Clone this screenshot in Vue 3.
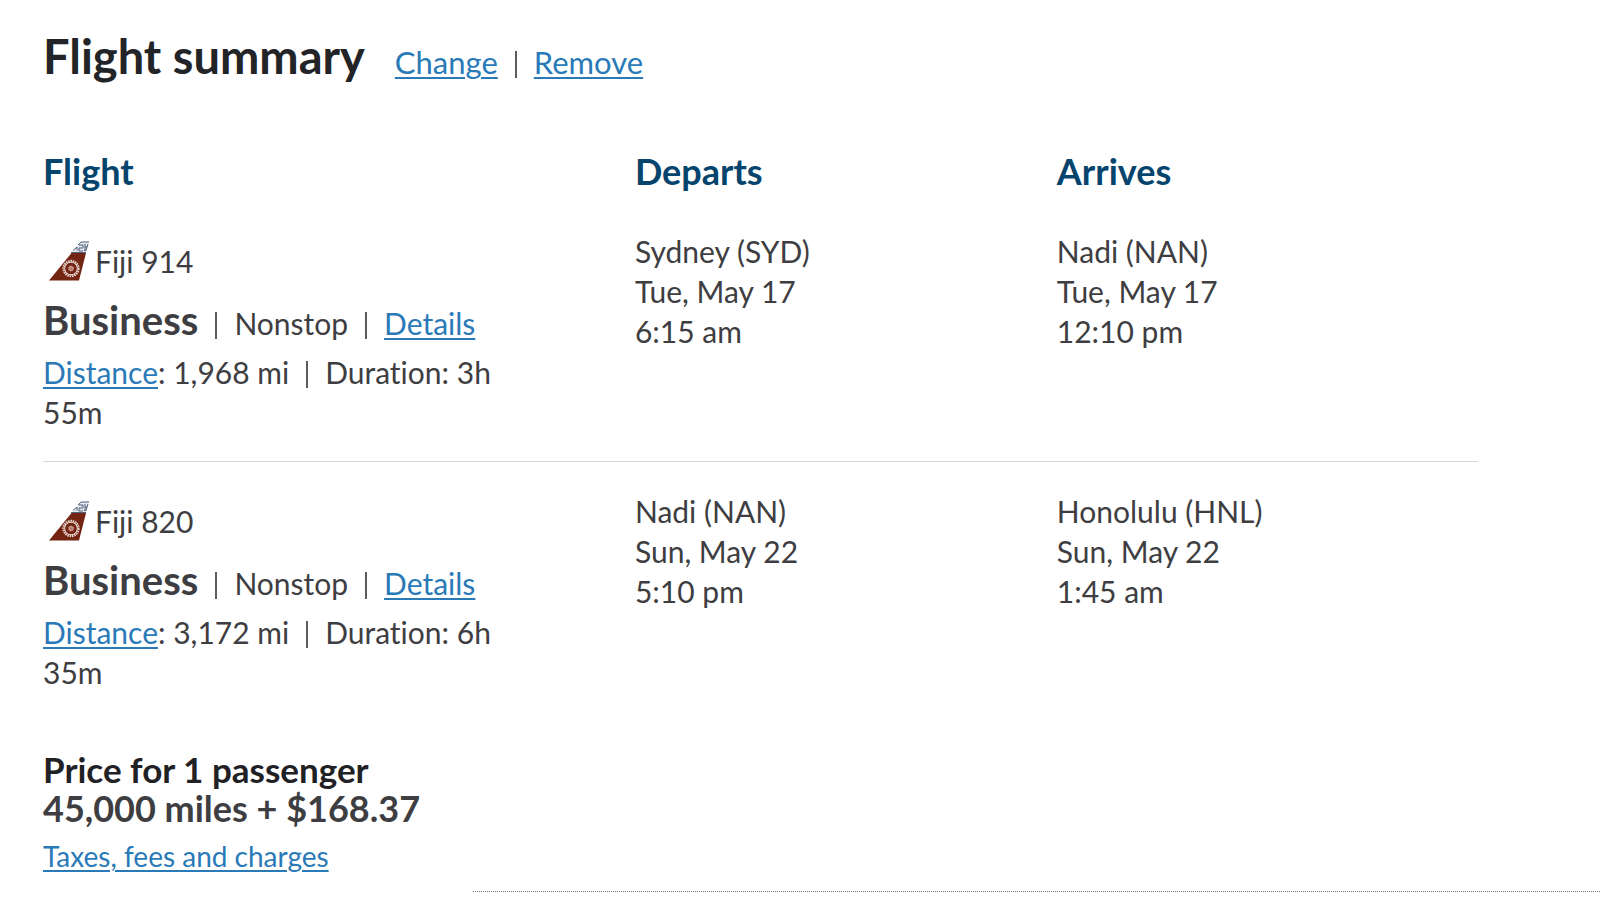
<script setup>
const legs = [
  {
    flight: 'Fiji 914', cabin: 'Business', stops: 'Nonstop', miles: '1,968 mi', hours: '3h', minutes: '55m',
    departs: ['Sydney (SYD)', 'Tue, May 17', '6:15 am'],
    arrives: ['Nadi (NAN)', 'Tue, May 17', '12:10 pm'],
  },
  {
    flight: 'Fiji 820', cabin: 'Business', stops: 'Nonstop', miles: '3,172 mi', hours: '6h', minutes: '35m',
    departs: ['Nadi (NAN)', 'Sun, May 22', '5:10 pm'],
    arrives: ['Honolulu (HNL)', 'Sun, May 22', '1:45 am'],
  },
]
</script>

<template>
  <main class="page">
    <header class="heading">
      <h1>Flight summary</h1>
      <nav class="actions">
        <a href="#change">Change</a>
        <span class="bar"></span>
        <a href="#remove">Remove</a>
      </nav>
    </header>

    <table class="legs">
      <thead>
        <tr>
          <th class="col-flight" scope="col">Flight</th>
          <th class="col-departs" scope="col">Departs</th>
          <th scope="col">Arrives</th>
        </tr>
      </thead>
      <tbody>
        <tr v-for="leg in legs" :key="leg.flight">
          <td class="flight">
            <div class="carrier">
              <svg class="tail" viewBox="0 0 42 40" aria-hidden="true">
                <path d="M0 39.500 22.500 12H37L30 39.500Z" fill="#732413" />
                <path d="M22 12 32 1 40 0 37 12Z" fill="#e3e7ed" />
                <path d="M22 11.500H37M24 9.500 28 6V9.500M29 4 32 1H40M30 4H34V7H30V10H34M36 3V10M39 3 38 6H36M38 6 37 9.500H35" fill="none" stroke="#52617c" stroke-width="1" />
                <circle cx="22" cy="27.500" r="7.500" fill="none" stroke="#dfc9c1" stroke-width="2.400" stroke-dasharray="1.600 .7" />
                <circle cx="22" cy="27.500" r="6.300" fill="none" stroke="#e7d7d0" stroke-width="1" />
                <circle cx="22" cy="27.500" r="2.200" fill="#b9786a" stroke="#e0c4ba" stroke-width="1.200" stroke-dasharray="1 .6" />
              </svg>
              <span>{{ leg.flight }}</span>
            </div>
            <div class="cabin">
              <strong>{{ leg.cabin }}</strong>
              <span class="bar"></span>
              <span>{{ leg.stops }}</span>
              <span class="bar"></span>
              <a href="#details">Details</a>
            </div>
            <div class="travel">
              <a href="#distance">Distance</a>: {{ leg.miles }}<span class="bar"></span><span>Duration: {{ leg.hours }}</span> <span>{{ leg.minutes }}</span>
            </div>
          </td>
          <td><div v-for="line in leg.departs" :key="line">{{ line }}</div></td>
          <td><div v-for="line in leg.arrives" :key="line">{{ line }}</div></td>
        </tr>
      </tbody>
    </table>

    <section class="price">
      <h2>Price for 1 passenger</h2>
      <p class="total">45,000 miles + $168.37</p>
      <a class="taxes" href="#taxes">Taxes, fees and charges</a>
    </section>
    <hr class="dotted" />
  </main>
</template>

<style>
body {
  background: #fff;
}
</style>

<style scoped>
.page {
  padding: 32px 0 6px 43px;
  font-family: Lato, "Liberation Sans", sans-serif;
  font-size: 30px;
  font-variant-ligatures: none;
  line-height: 40px;
  color: #3e3e42;
}
a {
  color: #2a7ab8;
  text-decoration-thickness: 2px;
  text-underline-offset: 3px;
}
.heading {
  display: flex;
  align-items: baseline;
  gap: 30px;
}
h1 {
  margin: 0;
  font-size: 47px;
  line-height: 48px;
  color: #222427;
}
.bar {
  display: inline-block;
  width: 2px;
  height: 27px;
  margin: 0 17px -4px;
  background: #5b5b60;
}
.actions {
  font-size: 31px;
}
.legs {
  width: calc(100% - 122px);
  margin-top: 67px;
  border-collapse: collapse;
  table-layout: fixed;
}
th {
  padding: 0 0 9px;
  font-size: 36px;
  line-height: 44px;
  text-align: left;
  color: #05446d;
}
.col-flight {
  width: 41.25%;
}
.col-departs {
  width: 29.4%;
}
td {
  padding: 29px 0;
  vertical-align: top;
}
tbody tr + tr {
  border-top: 1px solid #d9d9db;
}
.flight {
  padding: 39px 110px 29px 0;
}
.carrier {
  display: flex;
  align-items: center;
  gap: 4px;
  padding-left: 6px;
}
.tail {
  width: 42px;
  height: 40px;
}
.cabin {
  margin: 14px 0 4px;
  line-height: 50px;
}
.cabin strong {
  font-size: 40px;
}
.price {
  margin-top: 29px;
}
h2,
.total {
  margin: 0;
  font-size: 35px;
  font-weight: 700;
  line-height: 39px;
}
.total {
  font-size: 36px;
}
h2 {
  color: #1f2124;
}
.taxes {
  display: inline-block;
  margin-top: 8px;
  font-size: 28px;
}
.dotted {
  margin: 15px 0 0 430px;
  border: 0;
  border-top: 1px dotted #77777b;
}
</style>
